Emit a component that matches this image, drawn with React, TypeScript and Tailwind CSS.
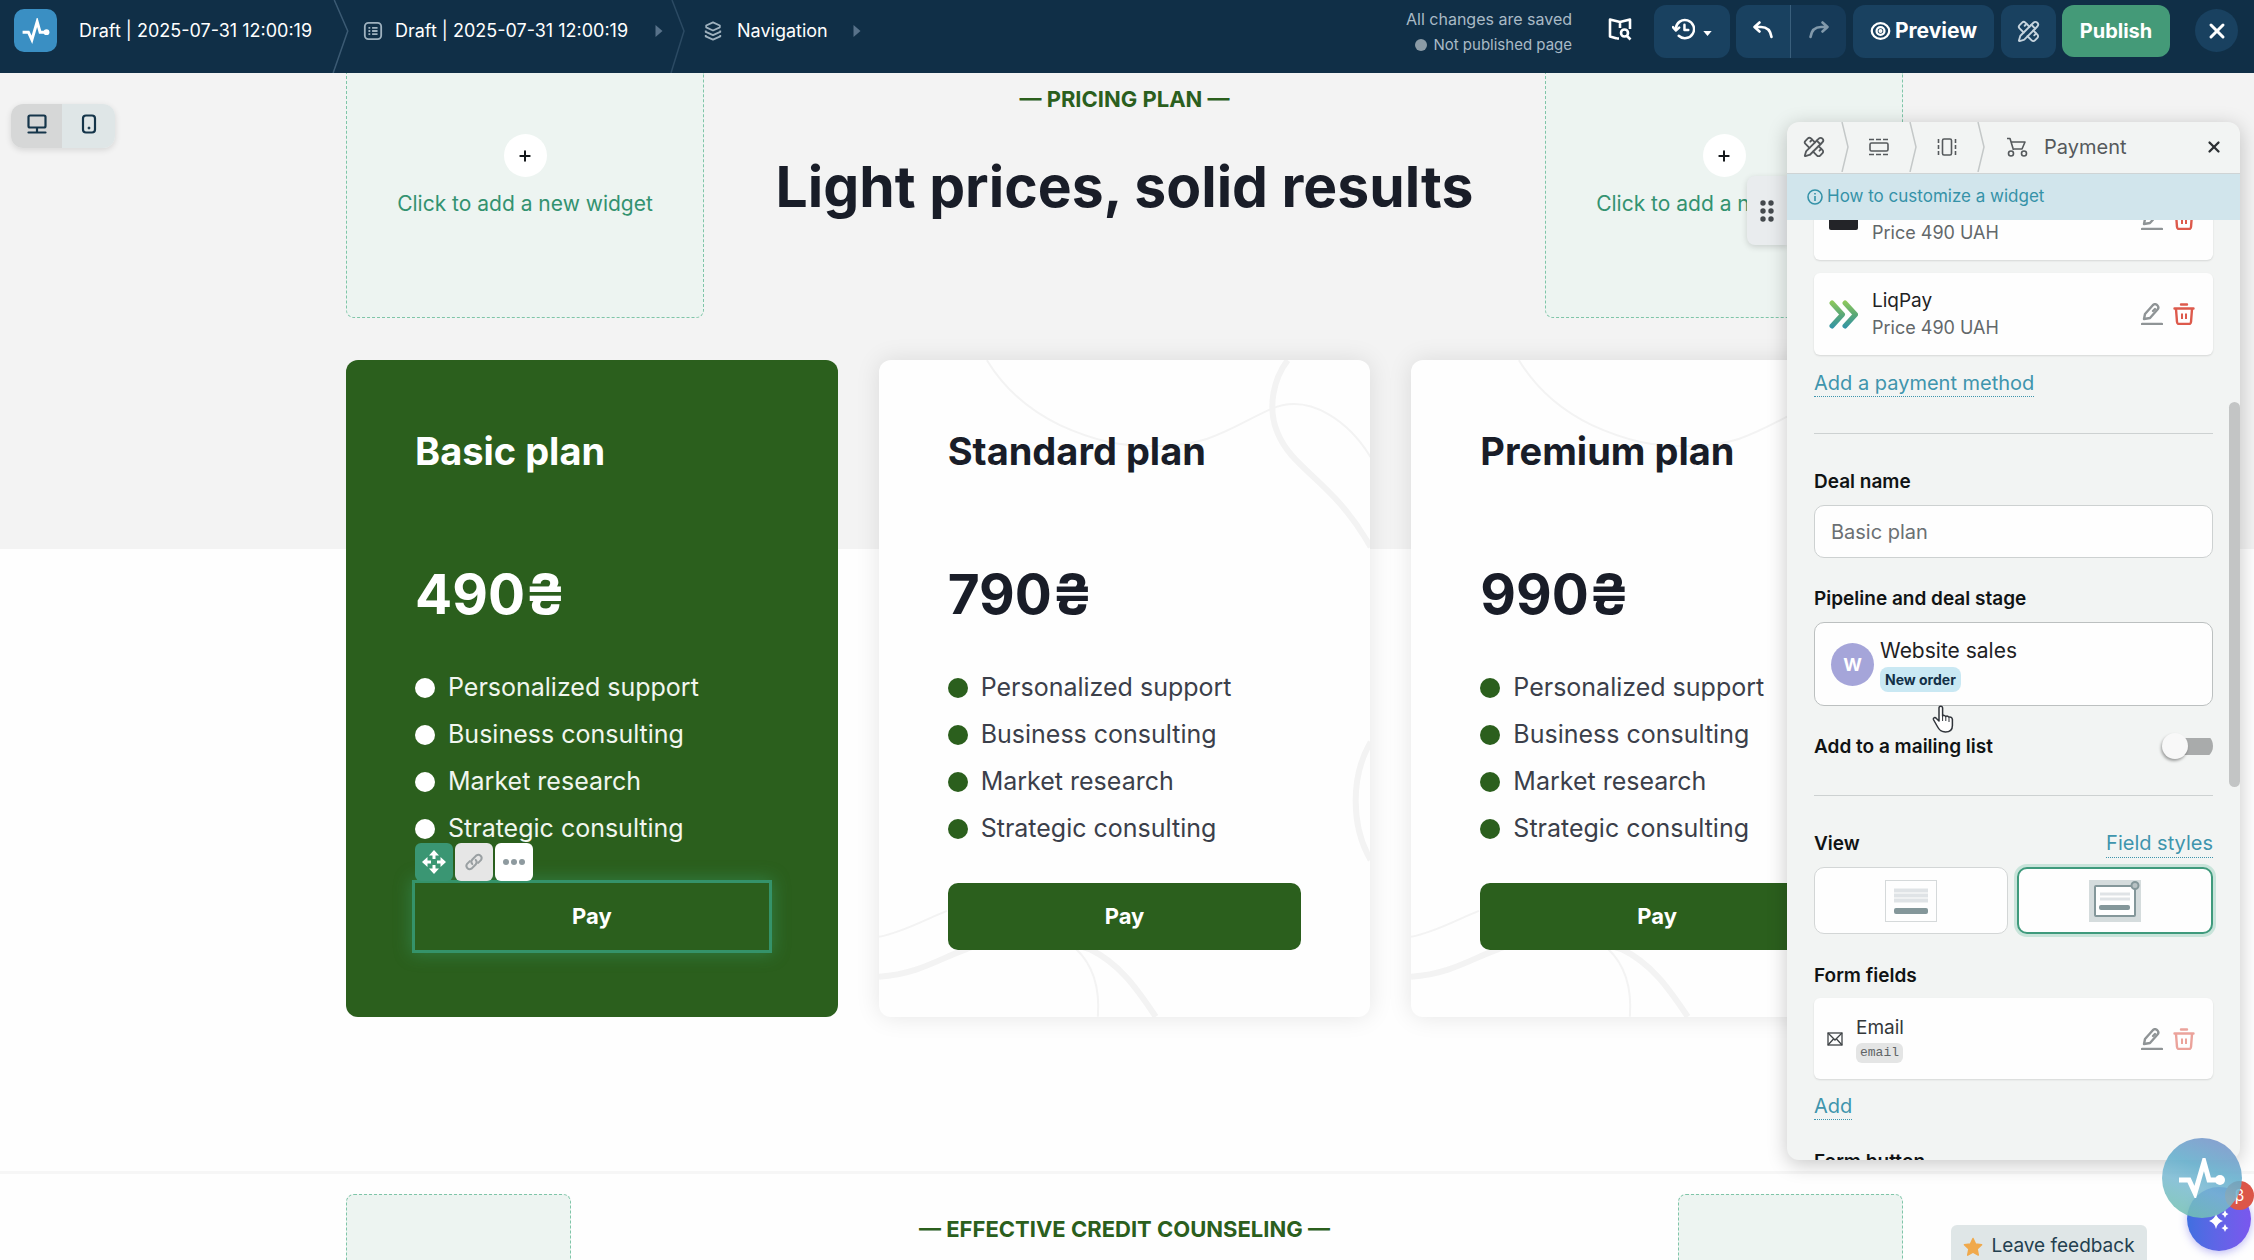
import React from "react";
import { PencilRuler, Plus, X } from "lucide-react";

const PulseLogo = ({ className }) => (
  <svg viewBox="0 0 48 40" fill="none" stroke="white" className={className}>
    <path d="M1 22h10l6 13L26 4l5 18h9" strokeWidth="5" strokeLinejoin="miter" />
    <circle cx="42" cy="22" r="5" fill="white" stroke="none" />
  </svg>
);

const HeaderChevron = ({ className }) => (
  <svg
    viewBox="0 0 16 73"
    preserveAspectRatio="none"
    fill="none"
    stroke="currentColor"
    className={className}
  >
    <path d="M2 0l12 31L1 73" strokeWidth="1.5" vectorEffect="non-scaling-stroke" />
  </svg>
);

const Triangle = () => (
  <svg viewBox="0 0 7 12" fill="#58728a" className="w-2 h-3">
    <path d="M0 0l7 6-7 6z" />
  </svg>
);

const EditIcon = () => (
  <svg viewBox="0 0 22 22" fill="none" stroke="#8f9496" strokeWidth="2.4" className="w-[22px] h-[22px]">
    <path d="M3 16l1-5 8-9a3 3 0 0 1 4 0l.5.5a3 3 0 0 1 0 4L9 15z" strokeLinejoin="round" />
    <path d="M12 8l2-2" strokeLinecap="round" />
    <path d="M1 21h20" strokeLinecap="round" />
  </svg>
);

const TrashIcon = () => (
  <svg viewBox="0 0 22 22" fill="none" stroke="#dd5a4c" strokeWidth="2.4" className="w-[22px] h-[22px]">
    <path d="M8 1.5h6M1.5 5.5h19" strokeLinecap="round" />
    <path d="M3 6l1 13q.2 2 2 2h10q1.8 0 2-2L19 6" strokeLinejoin="round" />
    <path d="M9 10.5v5.5M13 10.5v5.5" strokeWidth="2" />
  </svg>
);

const WidgetSlot = () => (
  <button className="w-[358px] h-[245px] shrink-0 flex flex-col items-center pt-[61px] border border-t-0 border-dashed border-[#7fc5a8] rounded-b-lg bg-[#edf4f1]">
    <span className="w-[43px] h-[43px] rounded-full bg-white flex items-center justify-center">
      <Plus size={16} strokeWidth={3} color="#15191c" />
    </span>
    <span className="mt-[11px] text-[21px] leading-8 text-[#339270] whitespace-nowrap">
      Click to add a new widget
    </span>
  </button>
);

const Waves = () => (
  <svg
    viewBox="0 0 492 657"
    fill="none"
    stroke="#f3f3f3"
    strokeWidth="2"
    className="absolute inset-0 w-full h-full"
  >
    <path d="M108 0C125 28 150 50 181 65c35 16 60 21 96 21 55 0 75-19 115-37 40-18 80 15 100 48" />
    <path d="M409 0c-14 18-21 48-10 73 15 37 56 48 93 114" strokeWidth="6" />
    <path d="M492 382c-20 34-20 84 0 118" strokeWidth="6" />
    <path d="M0 577c25-5 45-17 68-26" />
    <path d="M0 617c40-3 60-18 88-28 40-16 90-10 122 0 32 15 50 43 67 68" strokeWidth="6" />
    <path d="M197 589c18 17 24 42 22 68" />
  </svg>
);

const FEATURES = [
  "Personalized support",
  "Business consulting",
  "Market research",
  "Strategic consulting",
];

const PLANS = [
  { name: "Basic plan", price: "490₴", selected: true },
  { name: "Standard plan", price: "790₴", selected: false },
  { name: "Premium plan", price: "990₴", selected: false },
];

const WidgetToolbar = () => (
  <div className="absolute left-0 bottom-[69px] flex gap-[2px]">
    <button aria-label="Move" className="w-[38px] h-[38px] rounded-md bg-[#3a9673] flex items-center justify-center">
      <svg viewBox="0 0 24 24" fill="white" className="w-6 h-6">
        <path d="M12 0l5 5.500h-3.500V9h-3V5.500H7zM12 24l5-5.500h-3.500V15h-3v3.500H7zM0 12l5.500-5v3.500H9v3H5.500V17zM24 12l-5.500-5v3.500H15v3h3.500V17z" />
      </svg>
    </button>
    <button aria-label="Link" className="w-[38px] h-[38px] rounded-md bg-[#e6e6e6] flex items-center justify-center">
      <svg viewBox="0 0 24 24" fill="none" stroke="#9aa0a3" strokeWidth="2.4" strokeLinecap="round" className="w-5 h-5">
        <path d="M10 14.500a4 4 0 0 1 0-5.500l5-5a4 4 0 0 1 5.500 5.500L17 13" />
        <path d="M14 9.500a4 4 0 0 1 0 5.500l-5 5a4 4 0 0 1-5.500-5.500L7 11" />
      </svg>
    </button>
    <button aria-label="More" className="w-[38px] h-[38px] rounded-md bg-white flex items-center justify-center gap-[2px]">
      <span className="w-[6px] h-[6px] rounded-full bg-[#8e9a9f]" />
      <span className="w-[6px] h-[6px] rounded-full bg-[#8e9a9f]" />
      <span className="w-[6px] h-[6px] rounded-full bg-[#8e9a9f]" />
    </button>
  </div>
);

const PlanCard = ({ plan }) => (
  <div
    className={
      plan.selected
        ? "relative flex-1 h-[657px] rounded-xl overflow-hidden bg-[#2b5f1d] text-white"
        : "relative flex-1 h-[657px] rounded-xl bg-[#fefefe] text-[#191d28] shadow-[0_0_24px_rgba(0,0,0,0.1)]"
    }
  >
    {!plan.selected && <Waves />}
    <div className="relative px-[69px] pt-[67px]">
      <h3 className="text-[38px] leading-[48px] font-bold">{plan.name}</h3>
      <div className="mt-[85px] text-[55px] leading-[68px] font-bold">{plan.price}</div>
      <ul className="mt-[36px]">
        {FEATURES.map((feature) => (
          <li key={feature} className="flex items-center gap-[13px] h-[47px] text-[25px]">
            <span
              className={
                plan.selected
                  ? "w-5 h-5 rounded-full bg-white"
                  : "w-5 h-5 rounded-full bg-[#2b5f1d]"
              }
            />
            <span className={plan.selected ? "text-[#f1f6ef]" : "text-[#3b3f4a]"}>{feature}</span>
          </li>
        ))}
      </ul>
      <div className="relative mt-[31px]">
        {plan.selected && <WidgetToolbar />}
        <button
          className={
            plan.selected
              ? "block w-full h-[67px] text-[22px] font-bold bg-[#2b5f1d] outline-3 outline-[#35936a] shadow-[0_0_16px_4px_rgba(58,160,110,0.45)]"
              : "block w-full h-[67px] rounded-[10px] text-[22px] font-bold bg-[#2b5f1d] text-white"
          }
        >
          Pay
        </button>
      </div>
    </div>
  </div>
);

const Header = () => (
  <header className="h-[73px] shrink-0 bg-[#102f47] flex text-white">
    <a href="#" aria-label="Home" className="ml-[14px] mt-[9px] w-[43px] h-[43px] rounded-[10px] bg-[#3a8fc3] flex items-center justify-center">
      <PulseLogo className="w-[28px] h-[26px]" />
    </a>
    <div className="ml-[22px] h-[61px] flex items-center text-[18px] whitespace-nowrap">
      <span className="w-[253px]">Draft | 2025-07-31 12:00:19</span>
      <HeaderChevron className="self-start w-[18px] h-[73px] text-[#3b5a73]" />
      <button className="ml-[13px] flex items-center gap-3">
        <svg viewBox="0 0 22 22" fill="none" stroke="#9fb2bf" strokeWidth="2" className="w-5 h-5">
          <rect x="2" y="2" width="18" height="18" rx="4" />
          <path d="M6 7.500h2M10 7.500h6M6 11h2M10 11h6M6 14.500h2M10 14.500h6" />
        </svg>
        <span className="w-[248px] text-left">Draft | 2025-07-31 12:00:19</span>
        <Triangle />
      </button>
      <HeaderChevron className="self-start ml-[7px] w-[16px] h-[73px] text-[#2b4a63]" />
      <button className="ml-[17px] flex items-center gap-[14px]">
        <svg viewBox="0 0 22 22" fill="none" stroke="#9fb2bf" strokeWidth="2" strokeLinejoin="round" className="w-5 h-5">
          <path d="M11 1.500l7.500 3.500v2L11 10.500 3.500 7V5z" />
          <path d="M3 10.500v1.500l8 3.500 8-3.500v-1.500M3 15.500V17l8 3.500 8-3.500v-1.500" />
        </svg>
        <span className="w-[102px] text-left">Navigation</span>
        <Triangle />
      </button>
    </div>
    <div className="ml-auto pt-[5px] pr-[16px] flex items-start">
      <div className="pt-[2px] pr-[36px] text-right text-[16px] leading-[25px] text-[#a9bac6]">
        <div>All changes are saved</div>
        <div className="flex items-center justify-end gap-[6px] text-[15px]">
          <span className="w-3 h-3 rounded-full bg-[#8b9ba6]" />
          Not published page
        </div>
      </div>
      <button aria-label="Guide" className="mt-3 mr-[22px]">
        <svg viewBox="0 0 24 24" fill="none" stroke="white" strokeWidth="2.600" strokeLinejoin="round" className="w-6 h-6">
          <path d="M9 21.500l-7-2V2.500l10 2.500 10-2.500V12M12 5v6M9 21.500h2" />
          <circle cx="16.500" cy="16" r="3.500" />
          <path d="M19 19l3.500 3.500" />
        </svg>
      </button>
      <button aria-label="History" className="w-[76px] h-[53px] rounded-xl bg-[#194160] flex items-center justify-center gap-2">
        <svg viewBox="0 0 24 24" fill="none" stroke="white" strokeWidth="2.600" strokeLinecap="round" strokeLinejoin="round" className="mb-1 w-[23px] h-[23px]">
          <path d="M4 11a9.500 9.500 0 1 1 3 7.500" />
          <path d="M1 9.500l3 3.500 3.500-3" />
          <path d="M13 7v5.500h4" />
        </svg>
        <svg viewBox="0 0 10 6" fill="white" className="mt-[4px] w-[9px] h-[5px]">
          <path d="M0 0h10L5 6z" />
        </svg>
      </button>
      <div className="ml-[6px] flex">
        <button aria-label="Undo" className="w-[55px] h-[53px] rounded-l-xl bg-[#194160] border-r border-[#3a5f7c] flex items-center justify-center">
          <svg viewBox="0 0 20 18" fill="none" stroke="white" strokeWidth="2.600" strokeLinecap="round" strokeLinejoin="round" className="mb-1 w-5 h-[18px]">
            <path d="M6.500 1.500L1.500 6l5 4.500M2 6h6q9 0 10.500 10" />
          </svg>
        </button>
        <button aria-label="Redo" className="w-[55px] h-[53px] rounded-r-xl bg-[#163a58] flex items-center justify-center">
          <svg viewBox="0 0 20 18" fill="none" stroke="#8199ab" strokeWidth="2.600" strokeLinecap="round" strokeLinejoin="round" className="mb-1 w-5 h-[18px]">
            <path d="M13.500 1.500l5 4.500-5 4.500M18 6h-6Q3 6 1.500 16" />
          </svg>
        </button>
      </div>
      <button className="ml-[7px] pb-[2px] w-[141px] h-[53px] rounded-xl bg-[#194160] flex items-center justify-center gap-[4px] text-[21px] font-bold">
        <svg viewBox="0 0 24 22" fill="none" stroke="white" strokeWidth="2.600" className="w-[21px] h-5">
          <path d="M12 2C6 2 2 7 2 11s4 9 10 9 10-5 10-9-4-9-10-9z" />
          <circle cx="12" cy="11" r="4.500" />
          <circle cx="12" cy="11" r="1" />
        </svg>
        Preview
      </button>
      <button aria-label="Site styles" className="ml-[7px] w-[55px] h-[53px] rounded-xl bg-[#194160] flex items-center justify-center">
        <PencilRuler size={23} strokeWidth={2} color="#c5d3dd" />
      </button>
      <button className="ml-[6px] w-[108px] h-[52px] rounded-xl bg-[#449a78] text-[20px] font-bold">
        Publish
      </button>
      <button aria-label="Close" className="ml-[25px] mt-1 w-[43px] h-[43px] rounded-full bg-[#194160] flex items-center justify-center">
        <X size={24} strokeWidth={3} />
      </button>
    </div>
  </header>
);

const PanelChevron = () => (
  <svg viewBox="0 0 8 50" fill="none" stroke="#c4c8c8" className="w-2 h-[50px]">
    <path d="M1 0l6 25-6 25" strokeWidth="1.500" />
  </svg>
);

const RowActions = ({ faded }) => (
  <div className="ml-auto flex items-center gap-[10px]">
    <button aria-label="Edit">
      <EditIcon />
    </button>
    <button aria-label="Delete" className={faded ? "opacity-55" : ""}>
      <TrashIcon />
    </button>
  </div>
);

const PaymentMethod = ({ icon, name }) => (
  <div className="h-[82px] pl-[15px] pr-[18px] flex items-center rounded-md bg-[#fefefe] shadow-[0_1px_2px_rgba(0,0,0,0.12)]">
    {icon}
    <div className="ml-[14px] text-[19px] leading-[27px]">
      <div className="h-[27px] text-[#1e2224]">{name}</div>
      <div className="text-[18px] text-[#63686a]">Price 490 UAH</div>
    </div>
    <RowActions faded={false} />
  </div>
);

const PaymentPanel = () => (
  <aside className="absolute right-[14px] top-[49px] bottom-[100px] w-[453px] text-[#101314]">
    <button aria-label="Drag panel" className="absolute -left-10 top-[54px] w-10 h-[69px] rounded-l-lg bg-[#e9ecee] shadow-[0_2px_6px_rgba(0,0,0,0.15)] flex items-center justify-center">
      <svg viewBox="0 0 14 22" fill="#44494d" className="w-[14px] h-[22px]">
        <circle cx="3" cy="3" r="2.700" />
        <circle cx="11" cy="3" r="2.700" />
        <circle cx="3" cy="11" r="2.700" />
        <circle cx="11" cy="11" r="2.700" />
        <circle cx="3" cy="19" r="2.700" />
        <circle cx="11" cy="19" r="2.700" />
      </svg>
    </button>
    <div className="relative h-full rounded-xl overflow-hidden bg-[#f2f4f3] flex flex-col shadow-[0_4px_20px_rgba(0,0,0,0.22)]">
      <div className="h-[52px] shrink-0 pb-[2px] flex items-center text-[#55595c] border-b border-[#cfd4d5]">
        <button aria-label="Site styles" className="ml-[16px] mr-[16px]">
          <PencilRuler size={22} strokeWidth={2} />
        </button>
        <PanelChevron />
        <button aria-label="Section" className="mx-[20px]">
          <svg viewBox="0 0 20 18" fill="none" stroke="currentColor" strokeWidth="1.600" className="w-5 h-[18px]">
            <path d="M0 1.500h20M0 16.500h20" strokeDasharray="5 2" />
            <rect x="1" y="5" width="18" height="8" rx="1.500" />
          </svg>
        </button>
        <PanelChevron />
        <button aria-label="Column" className="mx-[20px]">
          <svg viewBox="0 0 20 18" fill="none" stroke="currentColor" strokeWidth="1.600" className="w-5 h-[18px]">
            <path d="M1.500 1v16M18.500 1v16" strokeDasharray="4 2" />
            <rect x="5.500" y="1" width="9" height="16" rx="1.500" />
          </svg>
        </button>
        <PanelChevron />
        <svg viewBox="0 0 22 20" fill="none" stroke="currentColor" strokeWidth="1.600" className="ml-[21px] w-[22px] h-5">
          <path d="M1 1.500h3l3.500 11.500M5 5h14l-3 7H8" strokeLinejoin="round" />
          <circle cx="5" cy="16.500" r="2.500" />
          <circle cx="18" cy="16.500" r="2.500" />
        </svg>
        <span className="ml-[16px] text-[20px]">Payment</span>
        <button aria-label="Close panel" className="ml-auto mr-[17px] text-[#2c3033]">
          <X size={18} strokeWidth={3} />
        </button>
      </div>
      <a href="#" className="h-[46px] shrink-0 flex items-center pl-[20px] gap-1 bg-[#d1e5ec] text-[17px] text-[#3592a8]">
        <svg viewBox="0 0 16 16" fill="none" stroke="currentColor" strokeWidth="1.600" className="w-4 h-4">
          <circle cx="8" cy="8" r="7" />
          <path d="M8 7v5M8 4v1.600" />
        </svg>
        How to customize a widget
      </a>
      <div className="flex-1 min-h-0 overflow-hidden px-[27px]">
        <div className="-mt-[42px] flex flex-col gap-[13px]">
          <PaymentMethod name="" icon={<span className="w-[29px] h-[22px] rounded-xs bg-[#232428]" />} />
          <PaymentMethod
            name="LiqPay"
            icon={
              <svg viewBox="0 0 29 29" fill="none" strokeWidth="5" strokeLinecap="round" strokeLinejoin="round" className="w-[29px] h-[29px]">
                <defs>
                  <linearGradient id="liq" x1="0" y1="0" x2="0" y2="29" gradientUnits="userSpaceOnUse">
                    <stop offset="0" stopColor="#93cc5a" />
                    <stop offset="0.5" stopColor="#5aa876" />
                    <stop offset="1" stopColor="#2f93ab" />
                  </linearGradient>
                </defs>
                <path d="M3 3l10.500 11.500L3 26M16 3l10.500 11.500L16 26" stroke="url(#liq)" />
              </svg>
            }
          />
        </div>
        <button className="block mt-[15px] text-[20px] leading-[26px] text-[#3f95ad] border-b border-dotted border-[#3f95ad]">
          Add a payment method
        </button>
        <hr className="mt-[36px] border-[#cdd1d1]" />
        <label htmlFor="deal-name" className="block mt-[35px] text-[19px] leading-[26px] font-semibold">
          Deal name
        </label>
        <input
          id="deal-name"
          defaultValue="Basic plan"
          className="block mt-[10px] w-full h-[53px] px-[16px] text-[20px] text-[#6b7073] bg-[#fefefe] border border-[#cdd1d1] rounded-[10px]"
        />
        <div id="pipeline-label" className="mt-[28px] text-[19px] leading-[26px] font-semibold">
          Pipeline and deal stage
        </div>
        <button
          aria-labelledby="pipeline-label"
          className="mt-[10px] w-full h-[84px] pl-[16px] flex items-center gap-[6px] text-left bg-[#fefefe] border border-[#bcc0c0] rounded-[10px]"
        >
          <span className="w-[43px] h-[43px] rounded-full bg-[#a5a5d9] text-white text-[18px] font-bold flex items-center justify-center">
            W
          </span>
          <span className="flex flex-col items-start">
            <span className="text-[21px] leading-[28px] text-[#1e2224]">Website sales</span>
            <span className="mt-[2px] px-[5px] rounded-lg bg-[#c9e8f3] text-[14px] leading-[25px] font-bold text-[#123047]">
              New order
            </span>
          </span>
        </button>
        <div className="mt-[27px] flex items-center justify-between">
          <label htmlFor="mailing" className="text-[19px] leading-[28px] font-semibold">
            Add to a mailing list
          </label>
          <input
            id="mailing"
            type="checkbox"
            role="switch"
            className="appearance-none self-start w-[51px] h-[26px] flex items-center bg-[linear-gradient(#a9abab,#a9abab)] bg-[length:38px_17px] bg-[position:right_center] bg-no-repeat rounded-r-full before:w-[26px] before:h-[26px] before:rounded-full before:bg-[#f8f8f8] before:shadow-[-1px_2px_3px_rgba(0,0,0,0.35)]"
          />
        </div>
        <hr className="mt-[34px] border-[#cdd1d1]" />
        <div className="mt-[33px] flex items-center justify-between">
          <span className="text-[19px] leading-[26px] font-semibold">View</span>
          <button className="text-[20px] leading-[28px] text-[#3f95ad] border-b border-dotted border-[#3f95ad]">
            Field styles
          </button>
        </div>
        <div className="mt-[9px] flex gap-[9px]">
          <label className="flex-1 h-[67px] rounded-[10px] bg-[#fefefe] border border-[#d3d6d6] flex items-center justify-center">
            <input type="radio" name="view" aria-label="Inline form" className="sr-only" />
            <svg viewBox="0 0 52 42" className="w-[52px] h-[42px]">
              <rect x="0.5" y="0.5" width="51" height="41" fill="#fefefe" stroke="#d5d9da" />
              <path d="M9 10.500h34M9 15.500h34M9 20.500h34" stroke="#dfe3e6" strokeWidth="4" />
              <rect x="9" y="28" width="34" height="6" rx="2" fill="#84979a" />
            </svg>
          </label>
          <label className="flex-1 h-[67px] rounded-[10px] bg-[#fefefe] border-2 border-[#3f9a7c] shadow-[0_0_0_3px_#c8e4da] flex items-center justify-center">
            <input type="radio" name="view" aria-label="Popup form" defaultChecked className="sr-only" />
            <svg viewBox="0 0 52 42" className="w-[52px] h-[42px]">
              <rect width="52" height="42" fill="#d5dcdd" />
              <rect x="6" y="6" width="40" height="30" rx="1" fill="#fefefe" stroke="#84979a" strokeWidth="2" />
              <path d="M11 14h30M11 19h30" stroke="#dfe3e6" strokeWidth="3" />
              <rect x="10" y="25" width="31" height="5" rx="2" fill="#84979a" />
              <circle cx="46" cy="5.500" r="3.500" fill="#b8c2c4" stroke="#84979a" strokeWidth="2" />
            </svg>
          </label>
        </div>
        <div className="mt-[29px] text-[19px] leading-[26px] font-semibold">Form fields</div>
        <div className="mt-[9px] h-[81px] pl-[13px] pr-[18px] flex items-center rounded-md bg-[#fefefe] shadow-[0_1px_2px_rgba(0,0,0,0.12)]">
          <svg viewBox="0 0 16 14" fill="none" stroke="#3e4346" strokeWidth="1.300" className="w-4 h-[14px]">
            <rect x="1" y="1" width="14" height="12" />
            <path d="M1 1l7 7 7-7M1 13l5.500-6M15 13L9.500 7" />
          </svg>
          <div className="ml-[13px] flex flex-col items-start">
            <span className="text-[19px] leading-[26px] text-[#33383a]">Email</span>
            <span className="mt-[2px] px-1 rounded-md bg-[#e4e5e5] font-['Liberation_Mono',monospace] text-[13px] leading-5 text-[#606466]">
              email
            </span>
          </div>
          <RowActions faded />
        </div>
        <button className="block mt-[14px] text-[20px] leading-[26px] text-[#3f95ad] border-b border-dotted border-[#3f95ad]">
          Add
        </button>
        <div className="mt-[29px] text-[19px] leading-[26px] font-semibold">Form button</div>
      </div>
      <div className="absolute right-0 top-[280px] w-[11px] h-[385px] rounded-full bg-[#c3c5c5]" />
    </div>
    {/* Mouse pointer */}
    <svg viewBox="0 0 22 28" fill="white" stroke="#30343a" strokeWidth="1.500" strokeLinejoin="round" className="absolute left-[145px] top-[583px] w-[22px] h-7">
      <path d="M7 16V3a1.800 1.800 0 0 1 3.600 0v8q1.500-1.500 3 .5 2-1.200 3.200.7 3-.8 3.600 2.300v6c0 5-3 6.500-7 6.500-5 0-6.500-2.500-8-5.500l-4-7c-.5-2 1.800-2.500 3-1z" />
      <path d="M10.600 11v5M13.800 12v4M17 13v4" strokeWidth="1" />
    </svg>
  </aside>
);

const HelpBubbles = () => (
  <>
    <button className="absolute right-[107px] -bottom-2 h-[43px] w-[196px] rounded-t-md bg-[#dfe6e7] flex items-center justify-center gap-2 text-[19px] text-[#24404f]">
      <svg viewBox="0 0 20 20" fill="#f0a94c" stroke="#f0a94c" strokeWidth="1.500" strokeLinejoin="round" className="w-5 h-5">
        <path d="M10 1.500l2.600 5.600 6 .7-4.500 4.200 1.200 6.100-5.300-3-5.300 3L5.900 12 1.400 7.800l6-.7z" />
      </svg>
      Leave feedback
    </button>
    <button aria-label="Assistant" className="absolute right-[3px] bottom-[9px] w-16 h-16 rounded-full bg-linear-to-r from-[#3f6fe0] to-[#7a57ee] shadow-[0_2px_8px_rgba(90,80,230,0.4)] flex items-center justify-center">
      <svg viewBox="0 0 24 24" fill="white" className="mt-1 w-6 h-6">
        <path d="M9 4q1 6 7 8-6 2-7 8-1-6-7-8 6-2 7-8z" />
        <path d="M18 1q.5 3 3.500 4-3 1-3.500 4-.5-3-3.500-4 3-1 3.500-4zM18 15q.5 3 3.500 4-3 1-3.500 4-.5-3-3.500-4 3-1 3.500-4z" />
      </svg>
    </button>
    <span className="absolute right-0 bottom-[50px] w-[29px] h-[29px] rounded-full bg-[#dc5648] text-[16px] leading-[28px] text-center text-white">
      β
    </span>
    <button aria-label="Support chat" className="absolute right-3 bottom-[42px] w-20 h-20 rounded-full bg-[linear-gradient(200deg,rgba(135,150,205,0.95),rgba(100,175,205,0.88)_40%,rgba(120,185,210,0.85)_60%,rgba(115,195,170,0.88))] flex items-center justify-center">
      <PulseLogo className="w-12 h-10" />
    </button>
  </>
);

const App = () => (
  <div className="h-screen flex flex-col overflow-hidden font-['Inter','Noto_Sans',sans-serif]">
    <Header />
    <main className="relative flex-1 min-h-0 overflow-hidden bg-[#fefefe]">
      {/* Page preview */}
      <section className="bg-[linear-gradient(#f3f3f3_476px,#fefefe_476px)] pb-[154px] pr-[5px]">
        <div className="w-[1557px] max-w-full mx-auto">
          <div className="flex">
            <WidgetSlot />
            <div className="flex-1 pt-3 text-center">
              <p className="text-[22px] leading-7 font-bold text-[#2b5f1d]">— PRICING PLAN —</p>
              <h2 className="mt-[40px] text-[57px] leading-[68px] font-bold text-[#191d28] whitespace-nowrap">
                Light prices, solid results
              </h2>
            </div>
            <WidgetSlot />
          </div>
          <div className="mt-[42px] flex gap-[41px]">
            {PLANS.map((plan) => (
              <PlanCard key={plan.name} plan={plan} />
            ))}
          </div>
        </div>
      </section>
      <section className="border-t-3 border-[#f6f6f6] pt-[20px] pr-[5px]">
        <div className="w-[1557px] max-w-full mx-auto flex">
          <div className="w-[225px] h-[180px] border border-dashed border-[#7fc5a8] rounded-lg bg-[#edf4f1]" />
          <p className="flex-1 pt-[21px] text-center text-[22px] leading-7 font-bold text-[#2b5f1d]">
            — EFFECTIVE CREDIT COUNSELING —
          </p>
          <div className="w-[225px] h-[180px] border border-dashed border-[#7fc5a8] rounded-lg bg-[#edf4f1]" />
        </div>
      </section>

      {/* Device switch */}
      <div className="absolute left-[11px] top-[31px] flex rounded-xl overflow-hidden shadow-[0_2px_6px_rgba(0,0,0,0.12)]">
        <button aria-label="Desktop view" className="w-[51px] h-[44px] bg-[#d6d7d7] flex items-center justify-center">
          <svg viewBox="0 0 20 20" fill="none" stroke="#15354a" strokeWidth="2.200" strokeLinejoin="round" strokeLinecap="round" className="mb-[5px] w-5 h-5">
            <rect x="1.500" y="1.500" width="17" height="12" rx="1.500" />
            <path d="M10 14v4M1.500 18.500h17" />
          </svg>
        </button>
        <button aria-label="Mobile view" className="w-[53px] h-[44px] bg-[#dfe6e7] flex items-center justify-center">
          <svg viewBox="0 0 16 20" fill="none" stroke="#15354a" strokeWidth="2.200" className="mb-[5px] w-4 h-5">
            <rect x="2" y="1.500" width="12" height="17" rx="3" />
            <circle cx="8" cy="14" r="1" fill="#15354a" strokeWidth="1" />
          </svg>
        </button>
      </div>
      <PaymentPanel />
      <HelpBubbles />
    </main>
  </div>
);

export default App;
